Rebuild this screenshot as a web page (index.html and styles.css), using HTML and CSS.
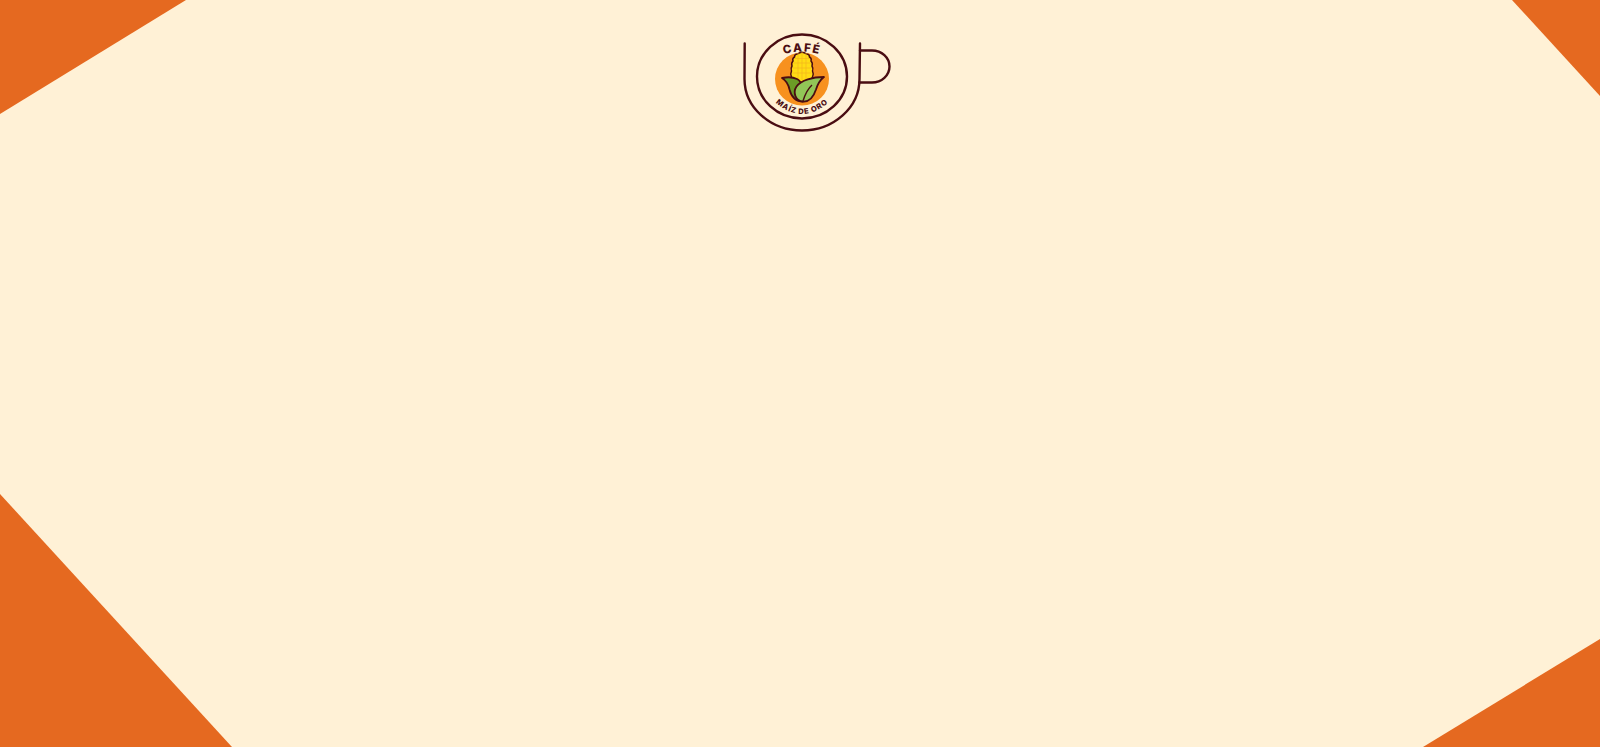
FILE: index.html
```html
<!DOCTYPE html>
<html lang="es">
<head>
<meta charset="utf-8">
<title>Café Maíz de Oro</title>
<link rel="stylesheet" href="styles.css">
</head>
<body>
<div class="corner corner-tl"></div>
<div class="corner corner-tr"></div>
<div class="corner corner-bl"></div>
<div class="corner corner-br"></div>
<header class="brand">
<svg class="logo" viewBox="700 25 200 115" width="200" height="115" role="img" aria-label="Café Maíz de Oro">
  <defs>
    <path id="arc-top" d="M776 57 Q802 46 828 57"/>
    <path id="arc-bottom" d="M766 93 Q802 135 838 93"/>
  </defs>
  <g class="line">
    <path d="M744.700 43.500 L744.500 79 A57.500 51.500 0 0 0 859.500 79 L860 43.500"/>
    <path d="M860 50.500 H872 A17.500 16 0 0 1 872 82.500 H859.500"/>
    <ellipse cx="802" cy="76.500" rx="45" ry="42"/>
  </g>
  <ellipse class="sun" cx="802" cy="79" rx="27" ry="26.500"/>
  <path class="corn" d="M797.500 54 Q802 50.500 806.500 54 Q809.500 54 809.500 57 Q812 58.500 811 61 Q813 63 812 66 Q813.500 68.500 812.500 71 Q814 74 812.500 77 L809 84 H795 L791.500 77 Q790 74 791.500 71 Q790.500 68.500 792 66 Q791 63 793 61 Q792 58.500 794.500 57 Q794.500 54 797.500 54Z"/>
  <path class="kernels" d="M794.500 58.500 H809.500 M793 63 H811 M792.500 68 H811.500 M792.500 73 H811.500 M798 53 V80 M802 51.500 V80 M806 53 V80"/>
  <g transform="translate(0 1.500)">
    <path class="leaf-dark" d="M782 76.500 C787 75.500 793 75.500 797 77.500 C802 80 804 89 803 100 C795 100 791 94 789.500 88 C788.500 83 786 79 782 76.500Z"/>
    <path class="leaf-light" d="M824 75.500 C813 75.500 801 78.500 796.500 85 C792.500 91 795.500 99.500 803 100 C810 100.500 814 94 816 88 C817.500 83 820 78.500 824 75.500Z"/>
    <path class="rib" d="M803 99.500 C805 93 807 88 812 83.500"/>
  </g>
  <text class="cafe"><textPath href="#arc-top" startOffset="50%">CAFÉ</textPath></text>
  <text class="maiz"><textPath href="#arc-bottom" startOffset="50%">MAÍZ DE ORO</textPath></text>
</svg>
</header>
</body>
</html>
```
FILE: styles.css
```css
html, body {
  margin: 0;
  height: 100%;
}
body {
  background: #fff1d6;
  overflow: hidden;
  position: relative;
  font-family: Inter, "Open Sans", "Liberation Sans", sans-serif;
}
.corner {
  position: absolute;
  background: #e56920;
}
.corner-tl {
  left: 0;
  top: 0;
  width: 186px;
  height: 114px;
  clip-path: polygon(0 0, 100% 0, 0 100%);
}
.corner-tr {
  right: 0;
  top: 0;
  width: 88px;
  height: 96px;
  clip-path: polygon(0 0, 100% 0, 100% 100%);
}
.corner-bl {
  left: 0;
  bottom: 0;
  width: 232px;
  height: 253px;
  clip-path: polygon(0 0, 100% 100%, 0 100%);
}
.corner-br {
  right: 0;
  bottom: 0;
  width: 177px;
  height: 108px;
  clip-path: polygon(100% 0, 100% 100%, 0 100%);
}
.brand {
  display: flex;
  justify-content: center;
  padding-top: 25px;
}
.logo {
  display: block;
}
.line {
  fill: none;
  stroke: #4a0d12;
  stroke-width: 2.400;
  stroke-linecap: round;
}
.sun {
  fill: #f7911e;
}
.corn {
  fill: #ffdc14;
  stroke: #4a0d12;
  stroke-width: 1.500;
}
.kernels {
  fill: none;
  stroke: #f4b51c;
  stroke-width: 0.700;
}
.leaf-dark {
  fill: #6b9c26;
  stroke: #4a0d12;
  stroke-width: 1.800;
  stroke-linejoin: round;
}
.leaf-light {
  fill: #92c657;
  stroke: #4a0d12;
  stroke-width: 1.800;
  stroke-linejoin: round;
}
.rib {
  fill: none;
  stroke: #4a0d12;
  stroke-width: 1.400;
}
.cafe, .maiz {
  fill: #4a0d12;
  font-weight: 800;
  text-anchor: middle;
}
.cafe {
  font-size: 11.500px;
  letter-spacing: 1.500px;
}
.maiz {
  font-size: 7.500px;
  letter-spacing: 0.800px;
}
```
